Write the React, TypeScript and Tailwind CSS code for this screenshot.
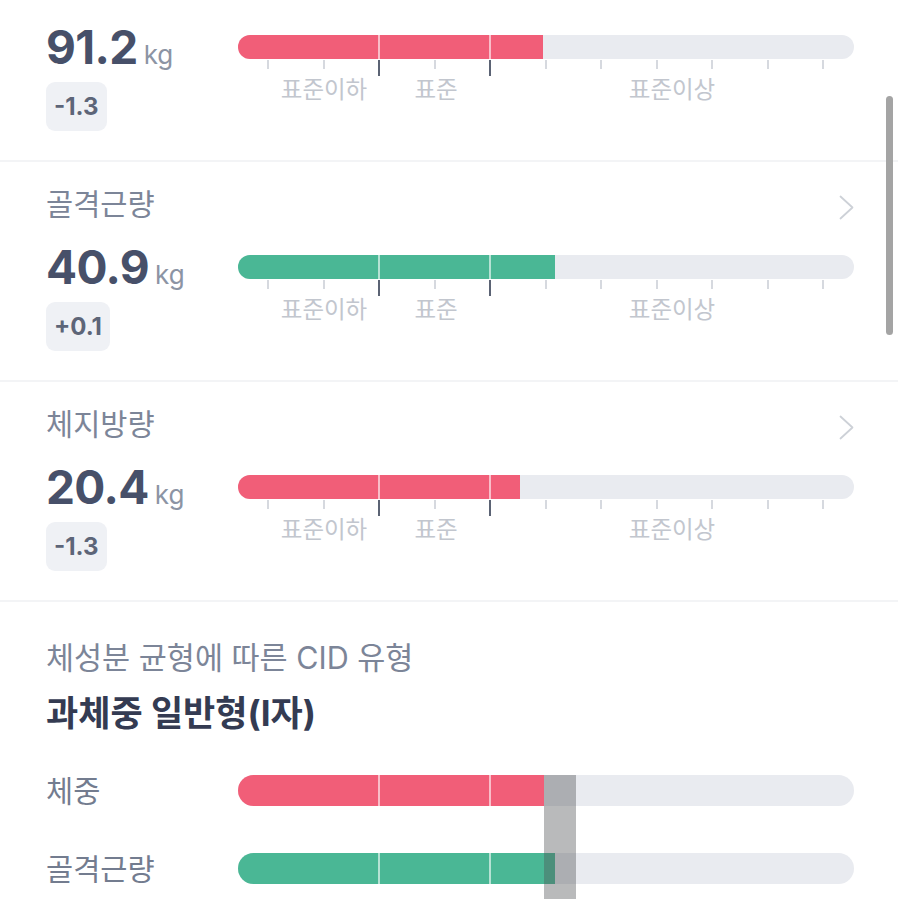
import React from "react";

const FONT = { fontFamily: '"Inter", "Noto Sans CJK KR", sans-serif' };
const TICKS = Array.from({ length: 11 }, (_, i) => 30 + i * 55.5);
const DARK = new Set([2, 4]);

function Chevron() {
  return (
    <svg width="17" height="27" viewBox="0 0 17 27" fill="none" className="mr-[-1px] mt-[6px]">
      <polyline points="2.5,2.5 14.5,13.5 2.5,24.5" stroke="#cdd1d7" strokeWidth="1.8" strokeLinecap="round" strokeLinejoin="round" />
    </svg>
  );
}

function Fill({ pct, color }: { pct: number; color: string }) {
  return (
    <>
      <div className={`absolute left-0 top-0 bottom-0 ${color}`} style={{ width: `${pct}px` }} />
      <div className="absolute top-0 bottom-0 left-[140px] w-[2px] bg-white/60" />
      <div className="absolute top-0 bottom-0 left-[251px] w-[2px] bg-white/60" />
    </>
  );
}

function Scale({ width, color }: { width: number; color: string }) {
  return (
    <div className="w-full">
      <div className="relative h-[24px] w-full overflow-hidden rounded-full bg-[#e9ebf0]">
        <Fill pct={width} color={color} />
      </div>
      <div className="relative h-[44px] w-full">
        {TICKS.map((x, i) => (
          <div
            key={i}
            className={DARK.has(i) ? "absolute top-[1px] w-[2px] h-[16px] bg-[#5b6374]" : "absolute top-[1px] w-[2px] h-[9px] bg-[#d6d9df]"}
            style={{ left: `${x - 1}px` }}
          />
        ))}
        <span className="absolute top-[16px] -translate-x-1/2 text-[23.5px] leading-[30px] text-[#c2c6ce] whitespace-nowrap" style={{ left: "86px" }}>표준이하</span>
        <span className="absolute top-[16px] -translate-x-1/2 text-[23.5px] leading-[30px] text-[#c2c6ce] whitespace-nowrap" style={{ left: "198px" }}>표준</span>
        <span className="absolute top-[16px] -translate-x-1/2 text-[23.5px] leading-[30px] text-[#c2c6ce] whitespace-nowrap" style={{ left: "434px" }}>표준이상</span>
      </div>
    </div>
  );
}

function Metric({ label, value, delta, width, color }: { label: string; value: string; delta: string; width: number; color: string }) {
  return (
    <section className="h-[218px] pl-[46px] pr-[44px] pt-[24px]">
      <div className="flex h-[36px] items-center justify-between">
        <span className="text-[29.5px] leading-[36px] text-[#7c8598]">{label}</span>
        <Chevron />
      </div>
      <div className="mt-[20px] flex">
        <div className="w-[192px] shrink-0">
          <div className="flex h-[50px] items-baseline">
            <span className="text-[46px] leading-[50px] font-bold tracking-[-0.6px] text-[#475069]">{value}</span>
            <span className="ml-[6px] text-[26px] leading-[50px] text-[#8c94a4]">kg</span>
          </div>
          <div className="mt-[10px] inline-flex h-[49px] items-center rounded-[9px] bg-[#eff1f5] px-[8px]">
            <span className="text-[24px] font-bold text-[#5d6578]">{delta}</span>
          </div>
        </div>
        <div className="flex-1 pt-[13px]">
          <Scale width={width} color={color} />
        </div>
      </div>
    </section>
  );
}

function CidRow({ label, width, color }: { label: string; width: number; color: string }) {
  return (
    <div className="flex h-[31px] items-center">
      <span className="w-[192px] shrink-0 text-[29.5px] leading-[36px] text-[#737c8f]">{label}</span>
      <div className="relative h-[31px] flex-1 overflow-hidden rounded-full bg-[#e9ebf0]">
        <Fill pct={width} color={color} />
      </div>
    </div>
  );
}

export default function App() {
  return (
    <div className="relative h-[899px] w-[898px] overflow-hidden bg-white" style={FONT}>
      <div className="mt-[-58px]">
        <Metric label="체중" value="91.2" delta="-1.3" width={305} color="bg-[#f15e78]" />
        <div className="h-[2px] bg-[#f3f4f6]" />
        <Metric label="골격근량" value="40.9" delta="+0.1" width={317} color="bg-[#4ab795]" />
        <div className="h-[2px] bg-[#f3f4f6]" />
        <Metric label="체지방량" value="20.4" delta="-1.3" width={282} color="bg-[#f15e78]" />
        <div className="h-[2px] bg-[#f3f4f6]" />
        <section className="pl-[46px] pr-[44px] pt-[38px]">
          <div className="text-[30.5px] leading-[36px] text-[#7c8598]">체성분 균형에 따른 CID 유형</div>
          <div className="mt-[17px] text-[35px] leading-[40px] font-bold text-[#343b52]">과체중 일반형(I자)</div>
          <div className="relative mt-[42px] flex flex-col gap-[47px]">
            <CidRow label="체중" width={306} color="bg-[#f15e78]" />
            <CidRow label="골격근량" width={317} color="bg-[#4ab795]" />
            <div className="absolute left-[498px] top-0 bottom-[-80px] w-[32px] bg-[rgba(80,82,86,0.4)]" />
          </div>
        </section>
      </div>
      <div className="absolute right-[5px] top-[96px] h-[239px] w-[7px] rounded-full bg-[#a4a4a4]" />
    </div>
  );
}
